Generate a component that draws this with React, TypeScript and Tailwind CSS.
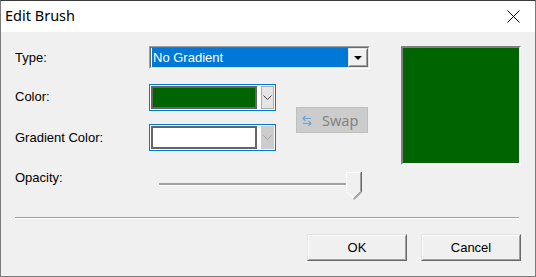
import React from "react";

const sans = { fontFamily: '"Liberation Sans", Arial, sans-serif' };
const ui = { fontFamily: '"Noto Sans", "Open Sans", sans-serif' };

function Chevron({ color }: { color: string }) {
  return (
    <svg width="9" height="6" viewBox="0 0 9 6">
      <path d="M0.5 0.5 L4.5 4.5 L8.5 0.5" fill="none" stroke={color} strokeWidth="1" />
    </svg>
  );
}

function ColorCombo({ fill, disabled }: { fill: string; disabled?: boolean }) {
  return (
    <div className="w-[127px] h-[27px] border border-[#0078d7] bg-white p-px flex">
      <div className="flex-1 border-2 border-[#646464]" style={{ background: fill }} />
      <div className="w-[4px]" />
      <div
        className={`w-[13px] flex items-center justify-center border ${
          disabled ? "bg-[#cccccc] border-[#cccccc]" : "bg-[#e5e5e5] border-[#adadad]"
        }`}
      >
        <Chevron color={disabled ? "#a3a3a3" : "#404040"} />
      </div>
    </div>
  );
}

function RaisedButton({ label }: { label: string }) {
  return (
    <div className="w-[100px] h-[27px] border border-t-[#e3e3e3] border-l-[#e3e3e3] border-r-[#696969] border-b-[#696969]">
      <div className="h-full border border-t-white border-l-white border-r-[#a0a0a0] border-b-[#a0a0a0] bg-[#f0f0f0] flex items-center justify-center text-[13px] text-black leading-[15px]">
        {label}
      </div>
    </div>
  );
}

export default function App() {
  return (
    <div className="w-[536px] h-[277px] flex flex-col border border-[#7a7a7a] border-t-[#3a3a3a] bg-[#f0f0f0] overflow-hidden" style={sans}>
      <div className="h-[31px] bg-white flex items-start justify-between pl-[4px] pr-[15px]">
        <span className="pt-[5px] text-[14.5px] leading-[19px] text-black" style={ui}>
          Edit Brush
        </span>
        <svg className="mt-[9px]" width="13" height="13" viewBox="0 0 13 13">
          <path d="M0.5 0.5 L12.5 12.5 M12.5 0.5 L0.5 12.5" stroke="#000" strokeWidth="1" />
        </svg>
      </div>

      <div className="flex-1 pt-[14px] pl-[14px] pr-[14px] text-[13px] leading-[15px] text-black">
        <div className="flex items-start">
          <div className="w-[386px]">
            <div className="flex h-[23px]">
              <div className="w-[134px] pt-[4px]">Type:</div>
              <div className="w-[221px] h-[23px] border border-t-[#a0a0a0] border-l-[#a0a0a0] border-r-white border-b-white">
                <div className="h-full border border-t-[#696969] border-l-[#696969] border-r-[#e3e3e3] border-b-[#e3e3e3] bg-white pl-px flex">
                  <div className="flex-1 bg-[#0078d7] text-white pl-px flex items-center">No Gradient</div>
                  <div className="w-[20px] border border-t-[#e3e3e3] border-l-[#e3e3e3] border-r-[#696969] border-b-[#696969]">
                    <div className="h-full border border-t-white border-l-white border-r-[#a0a0a0] border-b-[#a0a0a0] bg-[#f0f0f0] flex items-center justify-center">
                      <svg width="8" height="4" viewBox="0 0 8 4">
                        <path d="M0 0 L8 0 L4 4 Z" fill="#000" />
                      </svg>
                    </div>
                  </div>
                </div>
              </div>
            </div>

            <div className="flex mt-[15px]">
              <div>
                <div className="flex h-[27px]">
                  <div className="w-[134px] pt-[5px]">Color:</div>
                  <ColorCombo fill="#006400" />
                </div>
                <div className="flex h-[27px] mt-[13px]">
                  <div className="w-[134px] pt-[6px]">Gradient Color:</div>
                  <ColorCombo fill="#ffffff" disabled />
                </div>
              </div>
              <div className="ml-[20px] mt-[23px] w-[72px] h-[26px] bg-[#cccccc] border border-[#bfbfbf] flex items-center pl-[5px]">
                <svg width="10" height="11" viewBox="0 0 10 11">
                  <path d="M1 3.5 H9 M3.5 1 L1 3.5 L3.5 6" fill="none" stroke="#6aa6d6" strokeWidth="1.2" />
                  <path d="M1 8.5 H9 M6.5 6 L9 8.5 L6.5 11" fill="none" stroke="#6aa6d6" strokeWidth="1.2" />
                </svg>
                <span className="ml-[10px] text-[14.5px] leading-[19px] text-[#838383]" style={ui}>
                  Swap
                </span>
              </div>
            </div>
          </div>
          <div className="w-[120px] h-[119px] bg-[#006400] border-2 border-t-[#808080] border-l-[#808080] border-r-white border-b-white" />
        </div>

        <div className="flex h-[29px] mt-[5px]">
          <div className="w-[144px]">Opacity:</div>
          <div className="relative w-[202px] h-[29px]">
            <div className="mt-[13px] w-[200px] h-[3px] border-t-2 border-[#a0a0a0] border-b border-b-white" />
            <svg className="absolute left-[187px] top-[2px]" width="16" height="28" viewBox="0 0 16 28">
              <path d="M0.5 0.5 H14.5 V19.5 L7.5 26.5 L0.5 19.5 Z" fill="#f0f0f0" />
              <path d="M0.5 19.5 V0.5 H14" fill="none" stroke="#ffffff" />
              <path d="M14.5 0.5 V19.5 L7.5 26.5" fill="none" stroke="#a0a0a0" />
              <path d="M15.5 0 V20 L8 27.5" fill="none" stroke="#696969" />
              <path d="M0.5 19.5 L7 26" fill="none" stroke="#ffffff" />
            </svg>
          </div>
        </div>

        <div className="mt-[18px] w-[504px] border-t border-[#a0a0a0] border-b border-b-white" />

        <div className="flex justify-end gap-[14px] mt-[15px]">
          <RaisedButton label="OK" />
          <RaisedButton label="Cancel" />
        </div>
      </div>
    </div>
  );
}
